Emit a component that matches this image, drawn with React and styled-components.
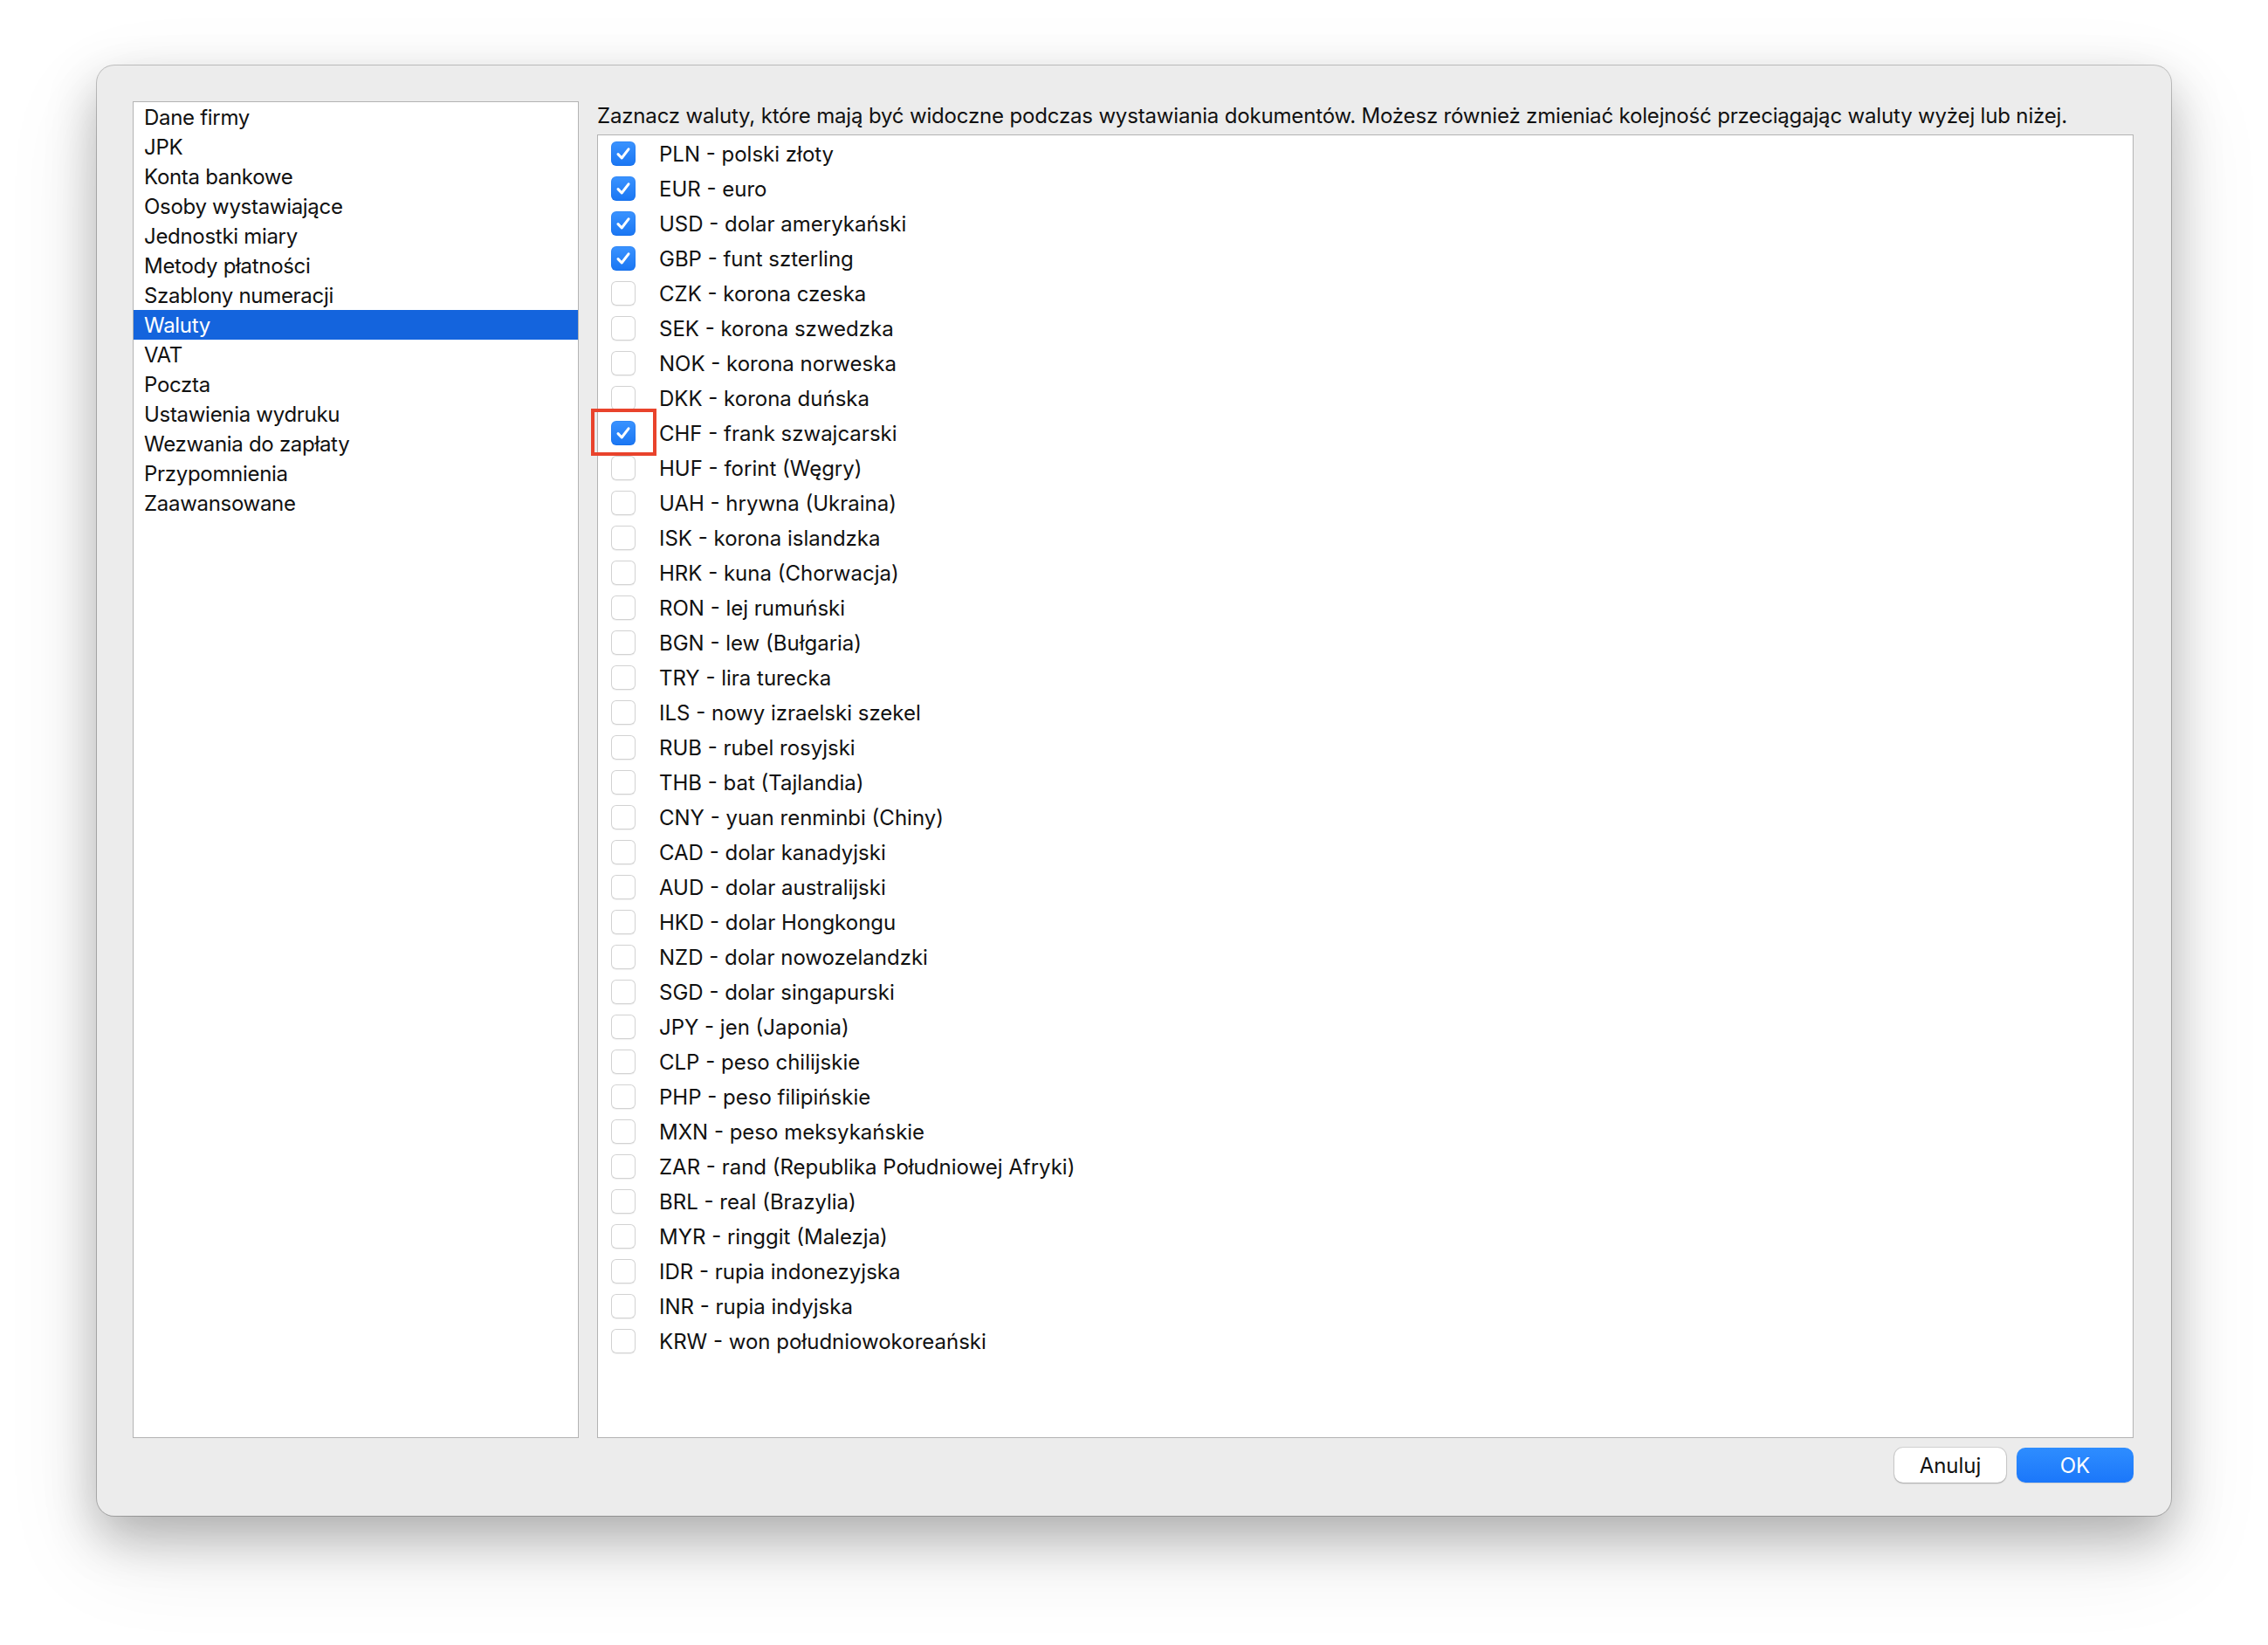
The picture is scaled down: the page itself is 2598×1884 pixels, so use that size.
import React from "react";
import styled, { createGlobalStyle } from "styled-components";

const Global = createGlobalStyle`
  html, body { margin: 0; padding: 0; background: #ffffff; }
  body { font-family: "Inter", "Liberation Sans", "Noto Sans", sans-serif; }
  * { box-sizing: border-box; }
`;

const Page = styled.div`
  width: 2598px;
  height: 1884px;
  padding: 75px 0 0 111px;
  background: #ffffff;
`;

const Window = styled.div`
  width: 2376px;
  height: 1661px;
  background: #ececec;
  border-radius: 20px;
  box-shadow: 0 0 0 1px rgba(0, 0, 0, 0.22), 0 24px 56px rgba(0, 0, 0, 0.26),
    0 40px 110px rgba(0, 0, 0, 0.1);
  padding: 41px 43px 38px 41px;
  display: grid;
  grid-template-columns: 511px 1fr;
  grid-template-rows: 1531px 40px;
  column-gap: 21px;
  row-gap: 11px;
  font-size: 24px;
  color: #111;
`;

const Sidebar = styled.div`
  background: #fff;
  border: 1px solid #b3b3b3;
  display: flex;
  flex-direction: column;
`;

const SideItem = styled.div`
  height: 34px;
  line-height: 32px;
  padding: 2px 0 0 12px;
  white-space: nowrap;
  letter-spacing: -0.3px;
  background: ${(p) => (p.$active ? "#1464dd" : "transparent")};
  color: ${(p) => (p.$active ? "#fff" : "#111")};
`;

const Main = styled.div`
  display: flex;
  flex-direction: column;
  min-width: 0;
`;

const Hint = styled.div`
  height: 30px;
  line-height: 30px;
  margin: 2px 0 6px;
  white-space: nowrap;
  letter-spacing: -0.17px;
`;

const ListBox = styled.div`
  flex: 1;
  background: #fff;
  border: 1px solid #b3b3b3;
  padding: 1px 0 0 15px;
`;

const Row = styled.div`
  height: 40px;
  display: flex;
  align-items: center;
  gap: 27px;
  white-space: nowrap;
`;

const BoxWrap = styled.div`
  position: relative;
  width: 28px;
  height: 28px;
  flex: none;
`;

const Box = styled.div`
  width: 28px;
  height: 28px;
  border-radius: 6px;
  display: flex;
  align-items: center;
  justify-content: center;
  background: ${(p) =>
    p.$checked ? "linear-gradient(#3a93ff, #1a76f3)" : "#ffffff"};
  box-shadow: ${(p) =>
    p.$checked
      ? "inset 0 0 0 1px rgba(0, 80, 200, 0.15)"
      : "inset 0 0 0 1px #d2d2d2, 0 1px 1px rgba(0, 0, 0, 0.06)"};
`;

const Marker = styled.div`
  position: absolute;
  left: -23px;
  top: -14px;
  width: 75px;
  height: 54px;
  border: 4px solid #e9432c;
  pointer-events: none;
`;

const Buttons = styled.div`
  grid-column: 1 / 3;
  display: flex;
  justify-content: flex-end;
  gap: 12px;
`;

const Button = styled.button`
  height: 40px;
  width: ${(p) => p.$w}px;
  border: none;
  border-radius: 10px;
  font-family: inherit;
  font-size: 24px;
  padding: 0;
  color: ${(p) => (p.$primary ? "#fff" : "#111")};
  background: ${(p) =>
    p.$primary ? "linear-gradient(#2e8dff, #1b77fa)" : "#ffffff"};
  box-shadow: ${(p) =>
    p.$primary
      ? "0 1px 1px rgba(0, 0, 0, 0.12)"
      : "0 0 0 1px rgba(0, 0, 0, 0.1), 0 1px 2px rgba(0, 0, 0, 0.22)"};
`;

const sideItems = [
  "Dane firmy",
  "JPK",
  "Konta bankowe",
  "Osoby wystawiające",
  "Jednostki miary",
  "Metody płatności",
  "Szablony numeracji",
  "Waluty",
  "VAT",
  "Poczta",
  "Ustawienia wydruku",
  "Wezwania do zapłaty",
  "Przypomnienia",
  "Zaawansowane",
];

const currencies = [
  ["PLN - polski złoty", true],
  ["EUR - euro", true],
  ["USD - dolar amerykański", true],
  ["GBP - funt szterling", true],
  ["CZK - korona czeska"],
  ["SEK - korona szwedzka"],
  ["NOK - korona norweska"],
  ["DKK - korona duńska"],
  ["CHF - frank szwajcarski", true, true],
  ["HUF - forint (Węgry)"],
  ["UAH - hrywna (Ukraina)"],
  ["ISK - korona islandzka"],
  ["HRK - kuna (Chorwacja)"],
  ["RON - lej rumuński"],
  ["BGN - lew (Bułgaria)"],
  ["TRY - lira turecka"],
  ["ILS - nowy izraelski szekel"],
  ["RUB - rubel rosyjski"],
  ["THB - bat (Tajlandia)"],
  ["CNY - yuan renminbi (Chiny)"],
  ["CAD - dolar kanadyjski"],
  ["AUD - dolar australijski"],
  ["HKD - dolar Hongkongu"],
  ["NZD - dolar nowozelandzki"],
  ["SGD - dolar singapurski"],
  ["JPY - jen (Japonia)"],
  ["CLP - peso chilijskie"],
  ["PHP - peso filipińskie"],
  ["MXN - peso meksykańskie"],
  ["ZAR - rand (Republika Południowej Afryki)"],
  ["BRL - real (Brazylia)"],
  ["MYR - ringgit (Malezja)"],
  ["IDR - rupia indonezyjska"],
  ["INR - rupia indyjska"],
  ["KRW - won południowokoreański"],
];

function Check() {
  return (
    <svg width="20" height="20" viewBox="0 0 20 20">
      <path
        d="M4 10.6 L8.2 15 L16 4.8"
        fill="none"
        stroke="#fff"
        strokeWidth="3"
        strokeLinecap="round"
        strokeLinejoin="round"
      />
    </svg>
  );
}

export default function App() {
  return (
    <Page>
      <Global />
      <Window>
        <Sidebar>
          {sideItems.map((s) => (
            <SideItem key={s} $active={s === "Waluty"}>
              {s}
            </SideItem>
          ))}
        </Sidebar>
        <Main>
          <Hint>
            Zaznacz waluty, które mają być widoczne podczas wystawiania
            dokumentów. Możesz również zmieniać kolejność przeciągając waluty
            wyżej lub niżej.
          </Hint>
          <ListBox>
            {currencies.map(([label, checked, marked]) => (
              <Row key={label}>
                <BoxWrap>
                  <Box $checked={!!checked}>{checked && <Check />}</Box>
                  {marked && <Marker />}
                </BoxWrap>
                {label}
              </Row>
            ))}
          </ListBox>
        </Main>
        <Buttons>
          <Button $w={128}>Anuluj</Button>
          <Button $w={134} $primary>
            OK
          </Button>
        </Buttons>
      </Window>
    </Page>
  );
}
